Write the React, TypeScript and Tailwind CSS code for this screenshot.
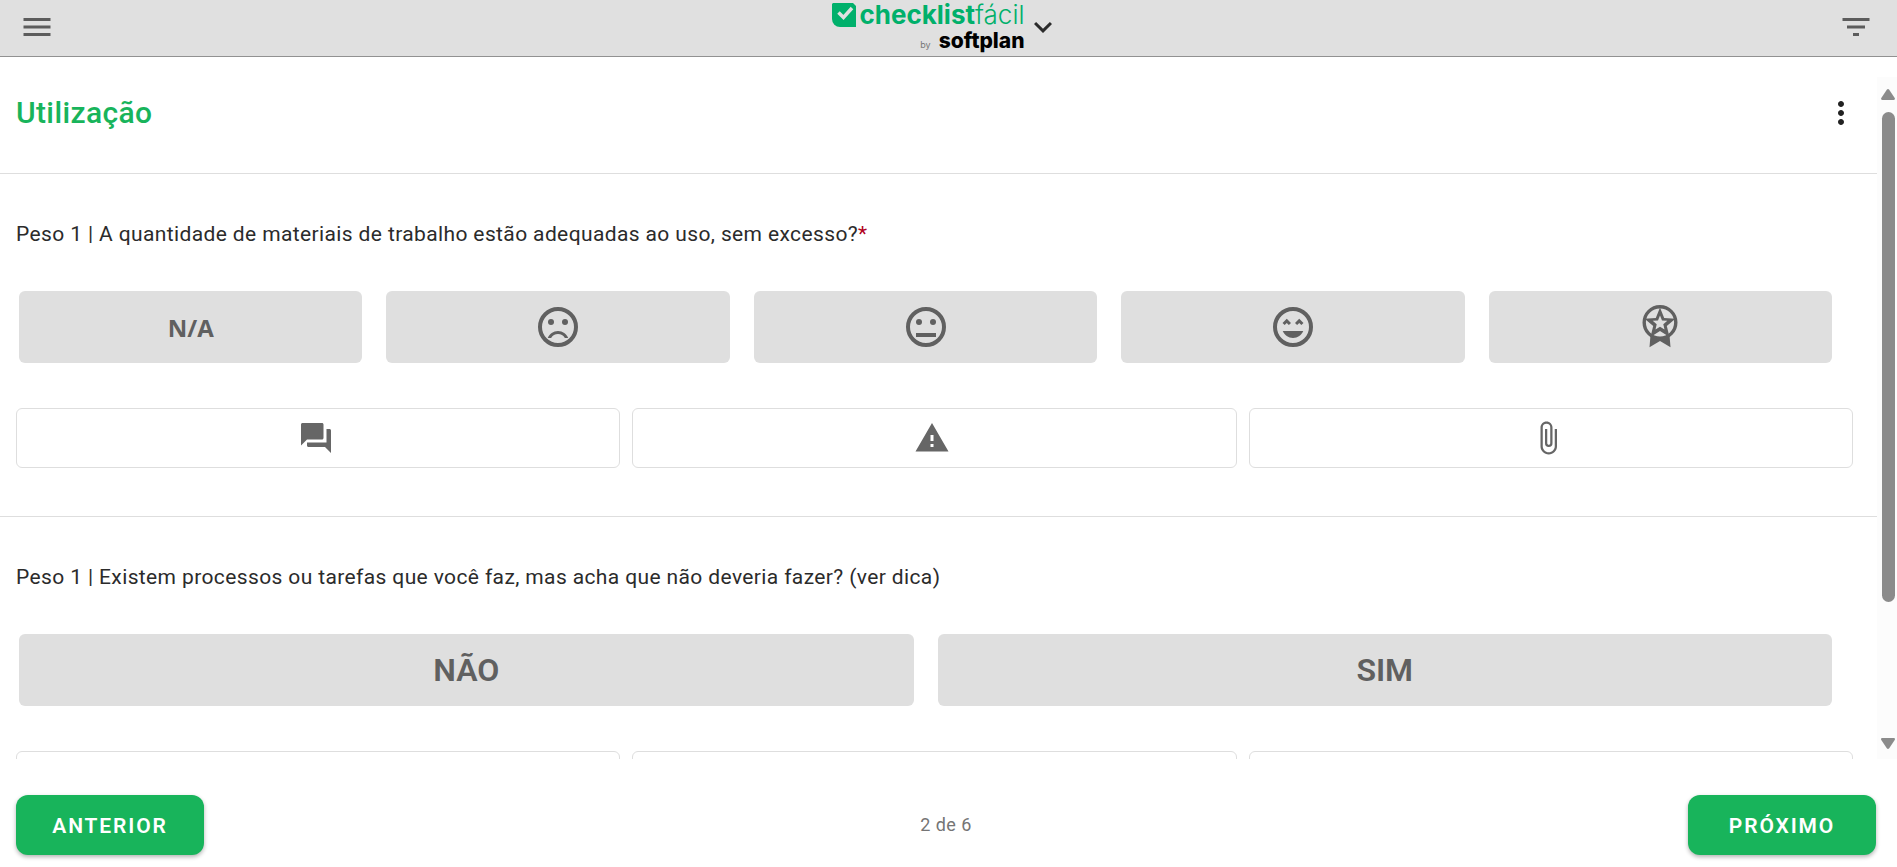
import React, { useState } from 'react';
import {
  MdAttachFile,
  MdFilterList,
  MdForum,
  MdKeyboardArrowDown,
  MdMenu,
  MdMoreVert,
  MdWarning,
} from 'react-icons/md';

type Option = { id: string; label: string; content: React.ReactNode };
type Question = { id: string; weight: number; text: string; required?: boolean; options: Option[] };

function Face({ children }: { children: React.ReactNode }) {
  return (
    <svg width="48" height="48" viewBox="0 0 24 24" fill="currentColor" aria-hidden="true">
      <circle cx="12" cy="12" r="9" fill="none" stroke="currentColor" strokeWidth="2" />
      {children}
    </svg>
  );
}

function SadFace() {
  return (
    <Face>
      <circle cx="8.5" cy="9.5" r="1.5" />
      <circle cx="15.5" cy="9.5" r="1.5" />
      <path d="M12 14c-2.33 0-4.31 1.46-5.11 3.5h1.67c.69-1.19 1.97-2 3.44-2s2.75.81 3.44 2h1.67c-.8-2.04-2.78-3.5-5.11-3.5z" />
    </Face>
  );
}

function NeutralFace() {
  return (
    <Face>
      <circle cx="8.5" cy="9.5" r="1.5" />
      <circle cx="15.5" cy="9.5" r="1.5" />
      <path d="M7 15h10v2H7z" />
    </Face>
  );
}

function HappyFace() {
  return (
    <Face>
      <path d="M8.88 10 9.94 11 11 9.94 8.88 7.82 6.76 9.94 7.82 11z" />
      <path d="M15.12 10 16.18 11l1.06-1.06-2.12-2.12L13 9.94 14.06 11z" />
      <path d="M12 17.5c2.33 0 4.31-1.46 5.11-3.5H6.89c.8 2.04 2.78 3.5 5.11 3.5z" />
    </Face>
  );
}

function Medal() {
  return (
    <svg width="48" height="48" viewBox="0 0 48 48" fill="currentColor" aria-hidden="true">
      <circle cx="24" cy="19.5" r="15.8" fill="none" stroke="currentColor" strokeWidth="3.4" />
      <path
        fillRule="evenodd"
        d="M24 4.5l4.2 10.4 11.2.9-8.6 7.3 2.7 10.9-9.5-5.9-9.5 5.9 2.7-10.9-8.6-7.3 11.2-.9zM24 12.5l-2 4.9-5.3.4 4 3.5-1.2 5.2 4.5-2.8 4.5 2.8-1.2-5.2 4-3.5-5.3-.4z"
      />
      <path d="M14.5 32c2.6 2.2 5.9 3.4 9.5 3.4s6.9-1.2 9.5-3.4l1 12.2L24 38l-10.5 6.2z" />
    </svg>
  );
}

function Logo() {
  return (
    <div className="flex flex-col items-end pt-1">
      <div className="flex items-center gap-[3px] text-[#00b06b]">
        <svg width="24" height="24" viewBox="0 0 24 24" aria-hidden="true">
          <path d="M1 0h20l3 3v21H8a8 8 0 0 1-8-8V1z" fill="currentColor" />
          <path d="M6.5 9.5l5 5L20 5" fill="none" stroke="#e0e0e0" strokeWidth="3.5" />
        </svg>
        <span className="font-['Inter',sans-serif] text-[26px] leading-7">
          <span className="font-bold">checklist</span>
          <span className="font-light">fácil</span>
        </span>
      </div>
      <div className="flex items-baseline gap-2">
        <span className="font-['Inter',sans-serif] text-[9px] leading-6 text-[#777]">by</span>
        <span className="font-['Inter',sans-serif] text-[21px] leading-6 font-extrabold text-black">softplan</span>
      </div>
    </div>
  );
}

const QUESTIONS: Question[] = [
  {
    id: 'materiais',
    weight: 1,
    text: 'A quantidade de materiais de trabalho estão adequadas ao uso, sem excesso?',
    required: true,
    options: [
      {
        id: 'na',
        label: 'N/A',
        content: <span className="pt-0.5 font-['Open_Sans',sans-serif] text-2xl font-bold">N/A</span>,
      },
      { id: 'ruim', label: 'Ruim', content: <SadFace /> },
      { id: 'regular', label: 'Regular', content: <NeutralFace /> },
      { id: 'bom', label: 'Bom', content: <HappyFace /> },
      { id: 'excelente', label: 'Excelente', content: <Medal /> },
    ],
  },
  {
    id: 'processos',
    weight: 1,
    text: 'Existem processos ou tarefas que você faz, mas acha que não deveria fazer? (ver dica)',
    options: [
      { id: 'nao', label: 'NÃO', content: <span className="text-[32px] leading-9 font-semibold">NÃO</span> },
      { id: 'sim', label: 'SIM', content: <span className="text-[32px] leading-9 font-semibold">SIM</span> },
    ],
  },
];

const ACTIONS = [
  { label: 'Comentário', Icon: MdForum },
  { label: 'Plano de ação', Icon: MdWarning },
  { label: 'Anexo', Icon: MdAttachFile },
];

function QuestionBlock({ question }: { question: Question }) {
  const [selected, setSelected] = useState('');

  return (
    <section className="border-b border-[#dedede] pt-12 pr-6 pb-12 pl-4">
      <p className="text-[21px] leading-6 tracking-[0.018em] text-[#2b2b2b]">
        Peso {question.weight} | {question.text}
        {question.required && <span className="text-[#b00020]">*</span>}
      </p>

      <div className="mt-[45px] mr-[21px] ml-[3px] flex gap-6">
        {question.options.map(option => (
          <button
            key={option.id}
            type="button"
            aria-label={option.label}
            aria-pressed={selected === option.id}
            onClick={() => setSelected(option.id)}
            className="flex h-[72px] flex-1 items-center justify-center rounded-md bg-[#dfdfdf] text-[#606060] aria-pressed:bg-[#c8c8c8]"
          >
            {option.content}
          </button>
        ))}
      </div>

      <div className="mt-[45px] flex gap-3">
        {ACTIONS.map(({ label, Icon }) => (
          <button
            key={label}
            type="button"
            aria-label={label}
            className="flex h-[60px] flex-1 items-center justify-center rounded-md border border-[#dedede] pr-[5px] text-[#666]"
          >
            <Icon size={36} />
          </button>
        ))}
      </div>
    </section>
  );
}

function ScrollTrack() {
  return (
    <div className="flex w-5 flex-shrink-0 flex-col items-center bg-[#fcfcfc] pt-3 pr-px pb-[10px] pl-[3px]" aria-hidden="true">
      <svg width="14" height="11" viewBox="0 0 14 11" fill="#8b8b8b">
        <path d="M5.8.8a1.5 1.5 0 0 1 2.4 0L13.7 9c.6 1 .1 2-1 2H1.3C.2 11-.3 10 .3 9z" />
      </svg>
      <div className="mt-3 w-[13px] flex-[490] rounded-full bg-[#8b8b8b]" />
      <div className="flex-[136]" />
      <svg width="14" height="11" viewBox="0 0 14 11" fill="#8b8b8b">
        <path d="M5.8 10.2a1.5 1.5 0 0 0 2.4 0L13.7 2c.6-1 .1-2-1-2H1.3C.2 0-.3 1 .3 2z" />
      </svg>
    </div>
  );
}

function NavButton({ children }: { children: React.ReactNode }) {
  return (
    <button
      type="button"
      className="h-[60px] w-[188px] rounded-xl bg-[#18b45b] pt-1 text-[21px] font-semibold tracking-[0.089em] text-white shadow-[0_2px_4px_rgba(0,0,0,0.3)]"
    >
      {children}
    </button>
  );
}

export default function App() {
  return (
    <div className="flex h-screen flex-col overflow-hidden bg-white font-['Roboto',sans-serif]">
      <header className="flex h-[57px] flex-shrink-0 items-center justify-between border-b border-[#919191] bg-[#e0e0e0] pr-[23px] pb-0.5 pl-[19px] text-[#5c5c5c]">
        <button type="button" aria-label="Menu">
          <MdMenu size={36} />
        </button>
        <button type="button" aria-label="Trocar aplicativo" className="flex items-center">
          <Logo />
          <MdKeyboardArrowDown size={36} color="#2b2b2b" />
        </button>
        <button type="button" aria-label="Filtrar">
          <MdFilterList size={36} />
        </button>
      </header>

      <main className="mt-5 flex min-h-0 flex-1">
        <div className="min-w-0 flex-1 overflow-hidden">
          <div className="flex items-center justify-between border-b border-[#dedede] pt-[18px] pr-[18px] pb-[42px] pl-4">
            <h1 className="text-3xl leading-9 font-medium tracking-[0.0125em] text-[#18b45b]">Utilização</h1>
            <button type="button" aria-label="Mais opções" className="text-[#222]">
              <MdMoreVert size={36} />
            </button>
          </div>
          {QUESTIONS.map(question => (
            <QuestionBlock key={question.id} question={question} />
          ))}
        </div>
        <ScrollTrack />
      </main>

      <footer className="flex flex-shrink-0 items-center justify-between pt-9 pr-[21px] pb-3 pl-4">
        <NavButton>ANTERIOR</NavButton>
        <span className="text-lg tracking-wide text-[#757575]">2 de 6</span>
        <NavButton>PRÓXIMO</NavButton>
      </footer>
    </div>
  );
}
